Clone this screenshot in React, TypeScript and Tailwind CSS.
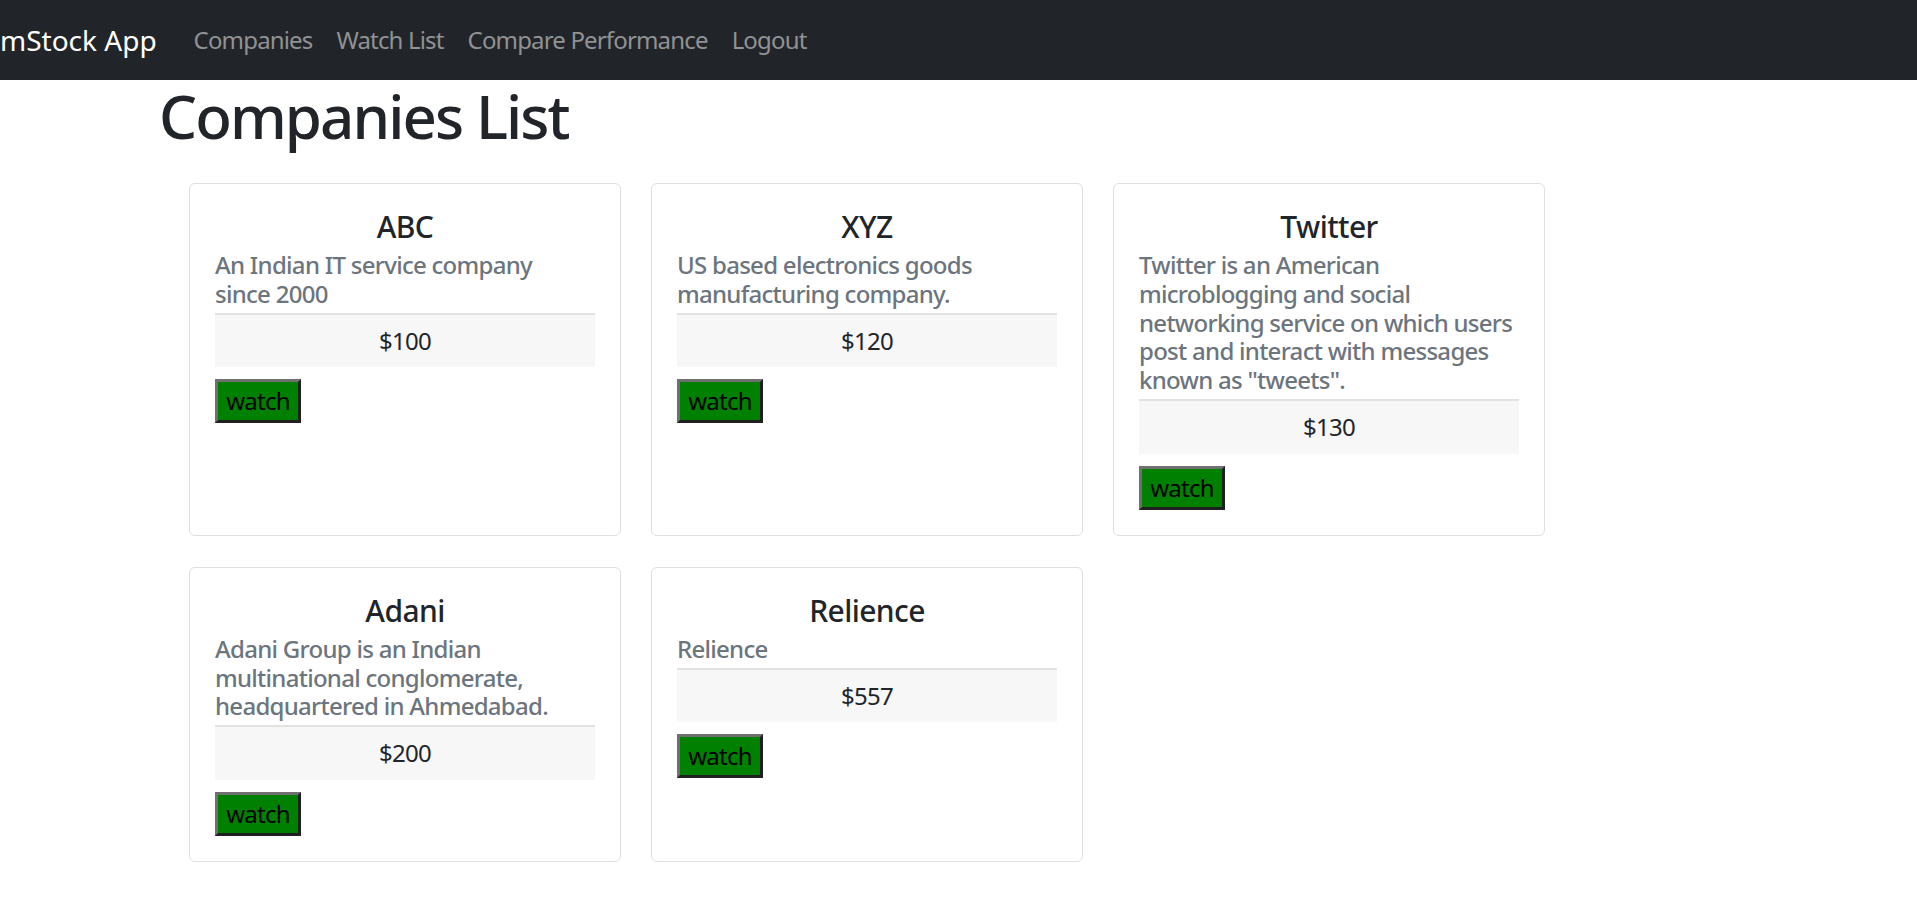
import React, { Fragment } from "react";

type Company = { name: string; desc: string[]; price: string };

const companies: Company[] = [
  { name: "ABC", desc: ["An Indian IT service company", "since 2000"], price: "$100" },
  { name: "XYZ", desc: ["US based electronics goods", "manufacturing company."], price: "$120" },
  {
    name: "Twitter",
    desc: [
      "Twitter is an American",
      "microblogging and social",
      "networking service on which users",
      "post and interact with messages",
      'known as "tweets".',
    ],
    price: "$130",
  },
  {
    name: "Adani",
    desc: ["Adani Group is an Indian", "multinational conglomerate,", "headquartered in Ahmedabad."],
    price: "$200",
  },
  { name: "Relience", desc: ["Relience"], price: "$557" },
];

function Card({ c }: { c: Company }) {
  return (
    <div className="border border-[#dfdfdf] rounded-[6px] px-[25px] py-[25px] bg-white">
      <h5 className="text-[30px] leading-[36px] font-medium tracking-[-0.02em] text-center text-[#212529] mb-[6px]">
        {c.name}
      </h5>
      <h6 className="text-[24px] leading-[28.8px] font-medium tracking-[-0.03em] text-[#6c757d] mb-[4px] whitespace-nowrap">
        {c.desc.map((line, i) => (
          <Fragment key={i}>
            {i > 0 && <br />}
            {line}
          </Fragment>
        ))}
      </h6>
      <div className="border-t-2 border-[#e2e2e2] bg-[#f7f7f7] py-[12px] text-center text-[24px] leading-[28.8px] tracking-[-0.03em] text-[#212529]">
        {c.price}
      </div>
      <button className="mt-[12px] w-[86px] h-[44px] bg-[#008000] border-[3px] border-t-[#707070] border-l-[#707070] border-b-[#202020] border-r-[#202020] text-[24px] leading-none tracking-[-0.03em] text-black">
        watch
      </button>
    </div>
  );
}

export default function App() {
  return (
    <div className="min-h-screen bg-white font-['Noto_Sans',sans-serif]">
      <nav className="h-[80px] bg-[#212529] flex items-center">
        <span className="text-[28px] text-white mr-[25px] leading-none">mStock App</span>
        <div className="flex items-center">
          {["Companies", "Watch List", "Compare Performance", "Logout"].map((l) => (
            <a key={l} className="px-[12px] text-[24px] leading-none tracking-[-0.035em] text-[#909294]">
              {l}
            </a>
          ))}
        </div>
      </nav>
      <h1 className="ml-[159px] text-[60px] leading-[72px] font-medium tracking-[-0.032em] text-[#212529] mb-[31px]">
        Companies List
      </h1>
      <div className="ml-[189px] grid grid-cols-[repeat(3,432px)] gap-x-[30px] gap-y-[31px] items-stretch">
        {companies.map((c) => (
          <Card key={c.name} c={c} />
        ))}
      </div>
    </div>
  );
}
